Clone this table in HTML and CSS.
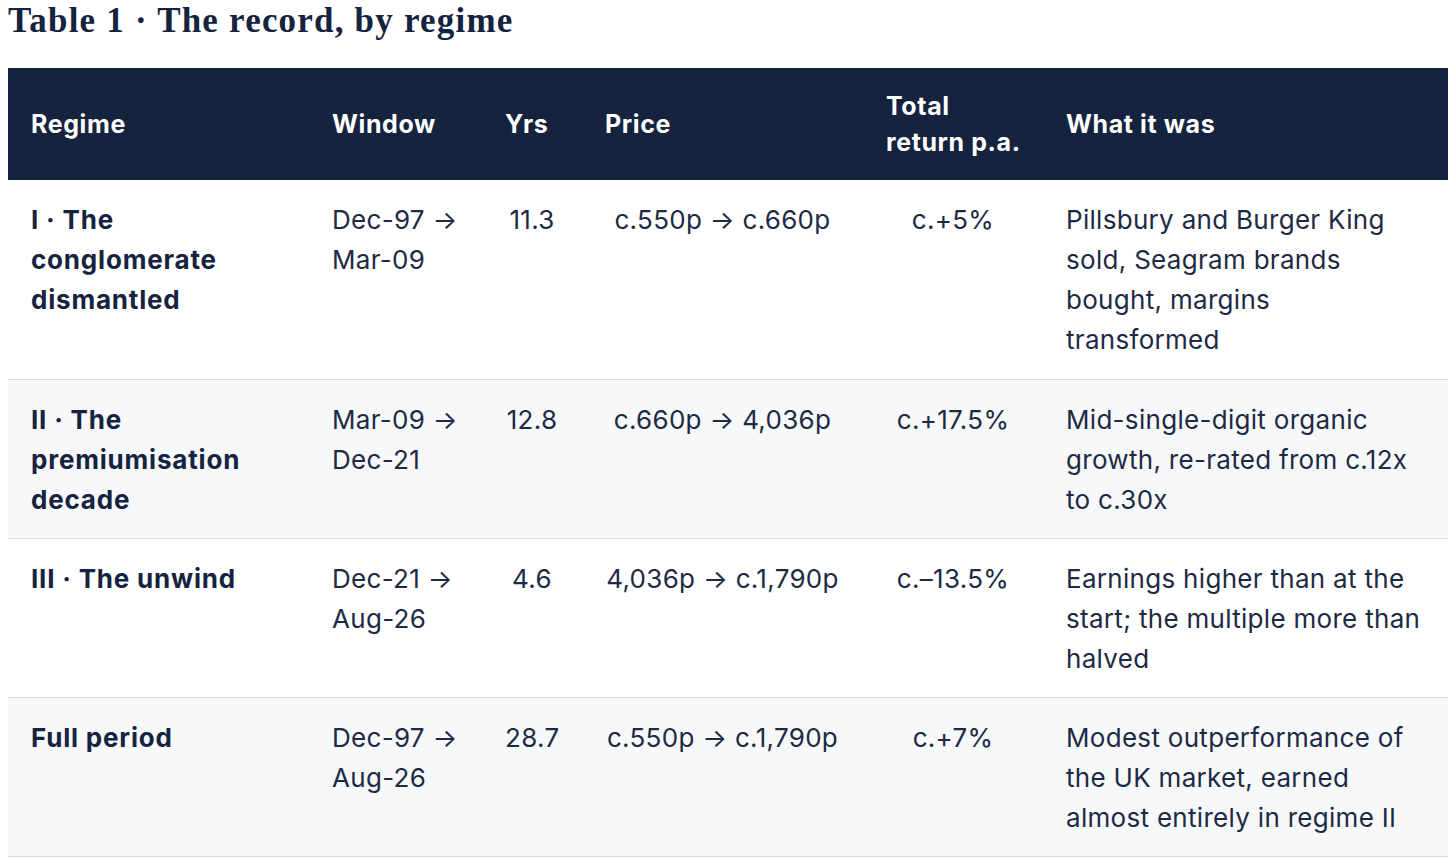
FILE: index.html
```html
<!DOCTYPE html>
<html lang="en">
<head>
<meta charset="utf-8">
<title>Table 1 · The record, by regime</title>
<link rel="stylesheet" href="styles.css">
</head>
<body>
<h2 class="title">Table 1 · The record, by regime</h2>
<table class="record">
  <colgroup>
    <col class="c-regime">
    <col class="c-window">
    <col class="c-yrs">
    <col class="c-price">
    <col class="c-ret">
    <col class="c-what">
  </colgroup>
  <thead>
    <tr>
      <th>Regime</th>
      <th>Window</th>
      <th>Yrs</th>
      <th>Price</th>
      <th>Total<br>return p.a.</th>
      <th>What it was</th>
    </tr>
  </thead>
  <tbody>
    <tr>
      <td class="name">I · The conglomerate dismantled</td>
      <td>Dec-97 → Mar-09</td>
      <td class="num">11.3</td>
      <td class="num">c.550p → c.660p</td>
      <td class="num">c.+5%</td>
      <td>Pillsbury and Burger King sold, Seagram brands bought, margins transformed</td>
    </tr>
    <tr class="alt">
      <td class="name">II · The premiumisation decade</td>
      <td>Mar-09 → Dec-21</td>
      <td class="num">12.8</td>
      <td class="num">c.660p → 4,036p</td>
      <td class="num">c.+17.5%</td>
      <td>Mid-single-digit organic growth, re-rated from c.12x to c.30x</td>
    </tr>
    <tr>
      <td class="name">III · The unwind</td>
      <td>Dec-21 → Aug-26</td>
      <td class="num">4.6</td>
      <td class="num">4,036p → c.1,790p</td>
      <td class="num">c.–13.5%</td>
      <td>Earnings higher than at the start; the multiple more than halved</td>
    </tr>
    <tr class="alt">
      <td class="name">Full period</td>
      <td>Dec-97 → Aug-26</td>
      <td class="num">28.7</td>
      <td class="num">c.550p → c.1,790p</td>
      <td class="num">c.+7%</td>
      <td>Modest outperformance of the UK market, earned almost entirely in regime II</td>
    </tr>
  </tbody>
</table>
</body>
</html>
```
FILE: styles.css
```css
html, body {
  margin: 0;
  padding: 0;
  background: #ffffff;
}
body {
  padding: 0 8px;
  font-family: Inter, "Noto Sans", "Liberation Sans", sans-serif;
  color: #1d2a44;
}
.title {
  margin: 0;
  padding-top: 1px;
  height: 68px;
  font-family: "Liberation Serif", "DejaVu Serif", serif;
  font-weight: 700;
  font-size: 35px;
  line-height: 40px;
  letter-spacing: 1.2px;
  color: #15233f;
  box-sizing: border-box;
}
.record {
  width: 1440px;
  border-collapse: collapse;
  table-layout: fixed;
  font-size: 26px;
  line-height: 40px;
  letter-spacing: 0.3px;
}
.c-regime { width: 301px; }
.c-window { width: 173px; }
.c-yrs { width: 100px; }
.c-price { width: 281px; }
.c-ret { width: 180px; }
.c-what { width: 405px; }
.record th {
  background: #15233f;
  color: #ffffff;
  font-weight: 700;
  font-size: 25px;
  line-height: 36px;
  letter-spacing: 0.6px;
  text-align: left;
  white-space: nowrap;
  padding: 20px 23px;
  vertical-align: middle;
}
.record td {
  padding: 20px 23px 18px;
  vertical-align: top;
  border-bottom: 1px solid #d8dde6;
  font-weight: 400;
}
.record tbody tr:first-child td {
  padding-bottom: 19px;
}
.record td.name {
  font-weight: 700;
  letter-spacing: 0.8px;
  color: #15233f;
}
.record td.num {
  text-align: center;
}
.record tr.alt td {
  background: #f7f8fa;
}
```
